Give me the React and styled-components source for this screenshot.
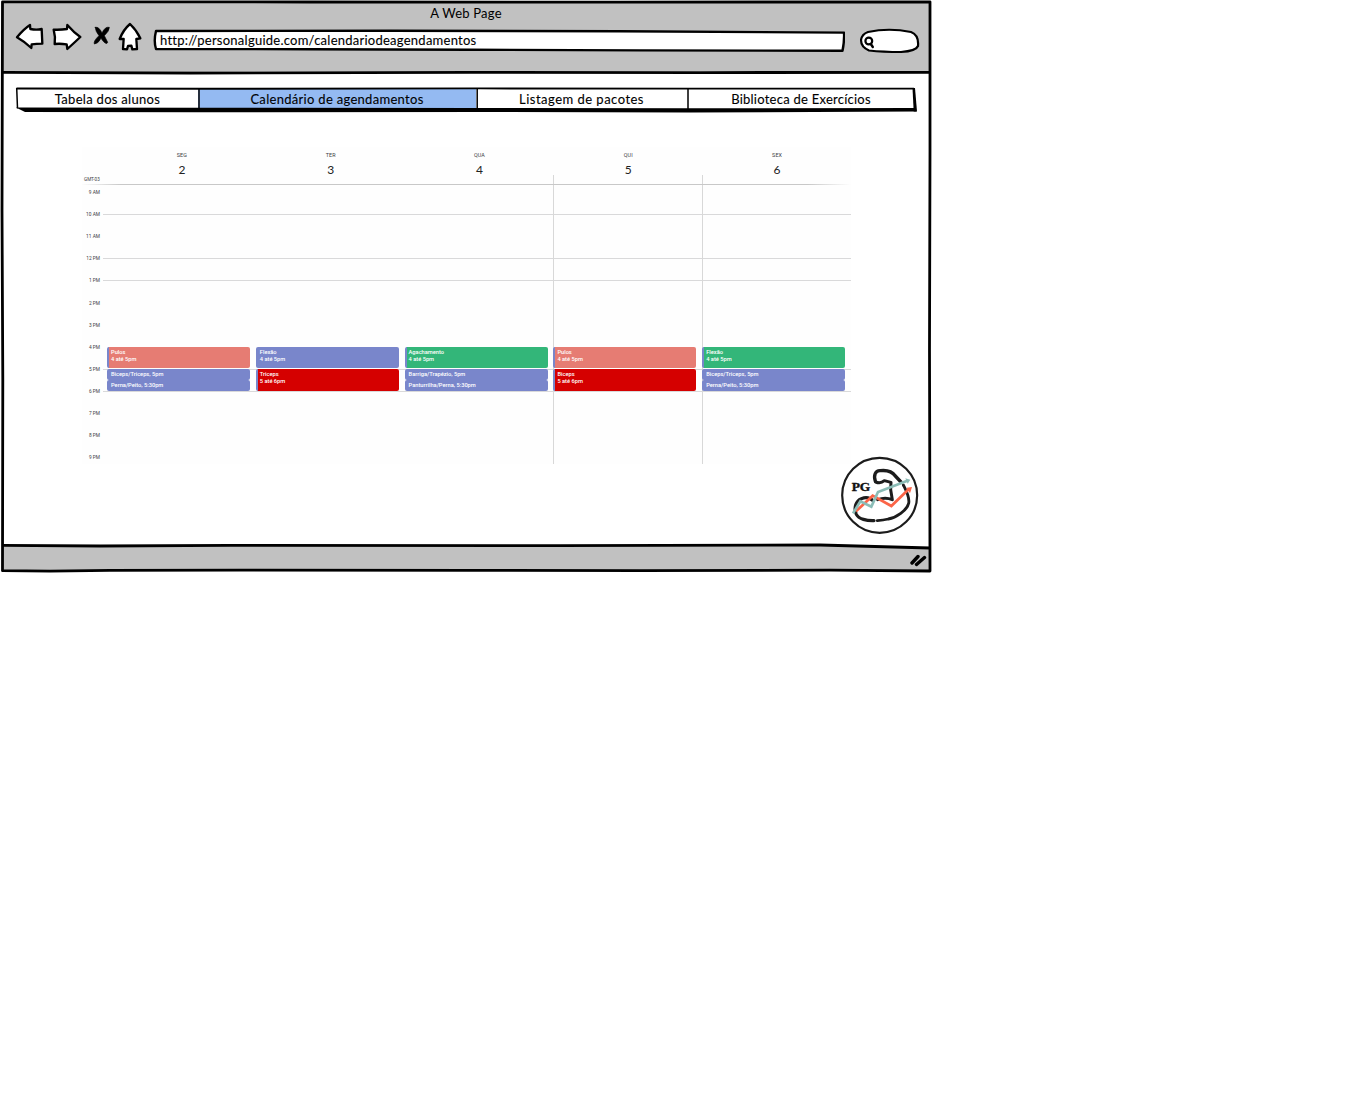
import React from "react";
import styled, { createGlobalStyle } from "styled-components";

const GlobalStyle = createGlobalStyle`
  *, *::before, *::after { box-sizing: border-box; }
  body { margin: 0; background: #fff; color: #000; font-family: Lato, "Open Sans", sans-serif; }
`;

const Browser = styled.main`
  width: 932px;
  height: 573px;
  display: grid;
  grid-template-rows: 71px 473px 29px;
  position: relative;
  padding: 0 1px;
`;

const FrameSketch = styled.svg`
  position: absolute;
  inset: 0;
  width: 932px;
  height: 573px;
  pointer-events: none;
`;

const Chrome = styled.header`
  background: #c1c1c1;
  margin: 1px 1px 0;
  display: flex;
  flex-direction: column;
`;

const Title = styled.div`
  height: 21px;
  padding-top: 3px;
  text-align: center;
  font-size: 13px;
  line-height: 19px;
  letter-spacing: 0.22px;
`;

const Toolbar = styled.div`
  display: flex;
  height: 32px;
  padding-left: 13px;
`;

const NavIcon = styled.svg`
  width: ${(p) => p.$w}px;
  height: 30px;
  margin-right: ${(p) => p.$gap}px;
  fill: ${(p) => (p.$solid ? "#000" : "#fff")};
  stroke: #000;
  stroke-width: ${(p) => (p.$solid ? 2 : 7)};
  stroke-linejoin: round;
  stroke-linecap: round;
`;

const Address = styled.div`
  position: relative;
  width: 692px;
  height: 24px;
  margin: 7px 14px 0 0;
  padding-left: 7px;
  font-size: 13px;
  line-height: 23px;
  white-space: nowrap;
`;

const Search = styled.svg`
  width: 61px;
  height: 26px;
  margin-top: 6px;
`;

const Outline = styled.svg`
  position: absolute;
  inset: 0;
  width: 100%;
  height: 100%;
`;

const AddressText = styled.span`
  position: relative;
  letter-spacing: 0.25px;
  -webkit-text-stroke: 0.1px #000;
`;

const Content = styled.section`
  display: flex;
  flex-direction: column;
  padding-top: 16px;
`;

const Tabs = styled.nav`
  position: relative;
  display: flex;
  width: 903px;
  height: 26px;
  margin-left: 14px;
  padding: 2px 3px 5px 2px;
`;

const Tab = styled.a`
  width: ${(p) => p.$w}px;
  background: ${(p) => (p.$active ? "#94baf2" : "#fff")};
  text-align: center;
  font-size: 13px;
  line-height: 20px;
  letter-spacing: ${(p) => p.$track};
  -webkit-text-stroke: 0.1px #000;
  white-space: nowrap;
`;

const Calendar = styled.section`
  width: 769px;
  height: 317px;
  margin: 34px 0 0 81px;
  background: #fefefe;
  color: #3c4043;
  font-family: Roboto, "Open Sans", sans-serif;
`;

const CalendarHead = styled.div`
  display: flex;
  height: 38px;
  border-bottom: 1px solid;
  border-image: linear-gradient(90deg, #fefefe 0, #c8c8c8 40px, #c8c8c8 725px, #fefefe 768px) 1;
`;

const Zone = styled.div`
  width: 25px;
  padding: 29px 0 0 2px;
  font-size: 4.6px;
  line-height: 7px;
  white-space: nowrap;
`;

const DayHead = styled.div`
  width: 148.8px;
  padding: 4px 0 0 1px;
  text-align: center;
  background: ${(p) => (p.$line ? "linear-gradient(#d8d8d8, #d8d8d8) 0 28px / 1px 9px no-repeat" : "none")};
`;

const DayName = styled.div`
  font-size: 5.4px;
  line-height: 8px;
  letter-spacing: 0.1px;
`;

const DayNumber = styled.div`
  font-family: Lato, sans-serif;
  font-size: 12px;
  line-height: 14px;
  margin-top: 4px;
  color: #222;
`;

const CalendarBody = styled.div`
  display: grid;
  height: 279px;
  overflow: hidden;
`;

const Hours = styled.div`
  grid-area: 1 / 1;
  padding-top: 6.8px;
`;

const HourRow = styled.div`
  display: flex;
  height: 22.15px;
`;

const HourLabel = styled.div`
  width: 18px;
  margin-top: -3px;
  margin-right: 3px;
  font-size: 4.8px;
  line-height: 8px;
  text-align: right;
  white-space: nowrap;
`;

const HourLine = styled.div`
  flex: 1;
  height: 1px;
  background: ${(p) => (p.$visible ? "#d9d9da" : "transparent")};
`;

const Days = styled.div`
  grid-area: 1 / 1;
  display: grid;
  grid-template-columns: repeat(5, 148.8px);
  padding-left: 25px;
`;

const Day = styled.div`
  display: grid;
  grid-template-rows: repeat(24, 11.075px);
  padding-top: 6.8px;
  background: ${(p) => (p.$line ? "linear-gradient(#d8d8d8, #d8d8d8) 0 0 / 1px 100% no-repeat" : "none")};
`;

const Event = styled.div`
  grid-row: ${(p) => p.$row} / span ${(p) => p.$span};
  width: 143px;
  height: ${(p) => p.$h}px;
  padding: 2.1px 0 0 ${(p) => (p.$stripe ? 2 : 4)}px;
  background: ${(p) => p.$color};
  border-left: ${(p) => (p.$stripe ? "2px solid #7986cb" : "0")};
  border-radius: 2px;
  color: #fff;
  font-size: 5.7px;
  font-weight: 500;
  line-height: 7px;
  white-space: nowrap;
`;

const Logo = styled.svg`
  width: 80px;
  height: 80px;
  margin: -9px 0 0 839px;
  flex: none;
`;

const Status = styled.footer`
  display: flex;
  justify-content: flex-end;
  align-items: flex-start;
  margin: 1px 1px 2px;
  padding: 7px 2px 0 0;
  background: #c1c1c1;
  clip-path: polygon(0 0, 88% 0, 100% 3px, 100% 100%, 0 100%);
`;

const Grip = styled.svg`
  width: 18px;
  height: 16px;
`;

const CORAL = "#e67c73";
const INDIGO = "#7986cb";
const GREEN = "#33b679";
const RED = "#d50000";

const tabs = [
  { label: "Tabela dos alunos", w: 181, track: "0.3px" },
  { label: "Calendário de agendamentos", w: 278, active: true, track: "0.3px" },
  { label: "Listagem de pacotes", w: 211, track: "0.48px" },
  { label: "Biblioteca de Exercícios", w: 228, track: "0.25px" },
];

const hours = ["9 AM", "10 AM", "11 AM", "12 PM", "1 PM", "2 PM", "3 PM", "4 PM", "5 PM", "6 PM", "7 PM", "8 PM", "9 PM"];
const ruled = ["10 AM", "12 PM", "1 PM", "5 PM", "6 PM"];

const at4 = (name, color) => ({ lines: [name, "4 até 5pm"], color, row: 15, span: 2, h: 21, stripe: color !== INDIGO });
const at5 = (name) => ({ lines: [name, "5 até 6pm"], color: RED, row: 17, span: 2, h: 22, stripe: true });
const half = (text, row) => ({ lines: [text], color: INDIGO, row, span: 1, h: 11.1 });

const days = [
  { name: "SEG", num: 2, events: [at4("Pulos", CORAL), half("Biceps/Triceps, 5pm", 17), half("Perna/Peito, 5:30pm", 18)] },
  { name: "TER", num: 3, events: [at4("Flexão", INDIGO), at5("Triceps")] },
  { name: "QUA", num: 4, events: [at4("Agachamento", GREEN), half("Barriga/Trapézio, 5pm", 17), half("Panturrilha/Perna, 5:30pm", 18)] },
  { name: "QUI", num: 5, line: true, events: [at4("Pulos", CORAL), at5("Biceps")] },
  { name: "SEX", num: 6, line: true, events: [at4("Flexão", GREEN), half("Biceps/Triceps, 5pm", 17), half("Perna/Peito, 5:30pm", 18)] },
];

function NavIcons() {
  return (
    <>
      <NavIcon $w={30} $gap={7} viewBox="45 66 90 90">
        <path d="M51 112 Q70 88 90 75 L91 87 Q110 91 125 87 L127 131 Q109 131 95 133 L94 144 Q72 124 51 112Z" />
      </NavIcon>
      <NavIcon $w={30} $gap={10} viewBox="156 66 90 90">
        <path d="M161 89 Q182 90 201 87 L202 75 Q222 98 241 111 Q221 130 202 147 L200 133 Q180 130 164 132 Q167 111 161 89Z" />
      </NavIcon>
      <NavIcon $w={19} $gap={7} $solid viewBox="276 66 57 90">
        <path d="M286 82 Q297 79 306 99 Q315 79 328 82 Q328 93 313 107 L323 127 Q319 138 303 115 Q294 132 283 132 Q280 123 297 107 Q286 94 286 82Z" />
      </NavIcon>
      <NavIcon $w={24} $gap={11} viewBox="354 66 72 90">
        <path d="M390 72 Q410 91 421 115 L409 117 L411 147 L397 148 L394 137 L384 138 L381 148 L369 147 L371 117 L359 117 Q370 89 390 72Z" />
      </NavIcon>
    </>
  );
}

function Frame() {
  return (
    <FrameSketch viewBox="0 0 932 573" fill="none" stroke="#000" strokeWidth="2.8" strokeLinejoin="round">
      <path d="M2.5 1.8 L310 2 L620 2.2 L930 1.8 L930 150 L929.5 350 L930 571 L830 570.2 L640 570.6 L470 570.4 L240 570.2 L110 570.3 L50 571.2 L2.5 570.7 L2.8 380 L2 210 L2.5 1.8Z" />
      <path d="M2 72.3 L190 73 L470 72.3 L700 72.6 L930 72.3" />
      <path d="M2 545.3 L100 546 L230 545.3 L560 545.6 L820 545 L930 548" />
    </FrameSketch>
  );
}

function BrandLogo() {
  return (
    <Logo viewBox="30 15 240 240" fill="none" strokeLinejoin="round" strokeLinecap="round">
      <circle cx="149" cy="136" r="112.5" stroke="#1c1c1c" strokeWidth="6.5" fill="#fff" />
      <text x="65" y="122" fill="#111" stroke="#111" strokeWidth="1.2" fontFamily="Liberation Serif, serif" fontWeight="700" fontSize="39" textLength="56" lengthAdjust="spacingAndGlyphs">PG</text>
      <path d="M136 94 C130 76 136 61 151 62 C169 60 187 65 196 78 L213 96" stroke="#1c1c1c" strokeWidth="10" />
      <path d="M220 105 C229 123 240 142 236 160 C232 181 197 203 175 207 Q160 211 142 212" stroke="#1c1c1c" strokeWidth="8.5" />
      <path d="M132 212 C111 213 86 207 79 193 C70 173 78 152 94 146 C109 140 122 145 129 152" stroke="#1c1c1c" strokeWidth="9.5" />
      <path d="M137 96 Q152 102 163 92 L183 97 L182 119 L187 149 Q166 140 143 149" stroke="#1c1c1c" strokeWidth="9" />
      <path d="M78 184 L128 137 L184 168 L236 118" stroke="#fb6548" strokeWidth="8" strokeLinejoin="miter" strokeLinecap="butt" />
      <path d="M230 113 L246 111 L240 130Z" fill="#fb6548" />
      <path d="M69 190 L91 154 L124 170 L144 126 L232 92" stroke="#8bbcb6" strokeWidth="8" strokeLinejoin="miter" strokeLinecap="butt" />
      <path d="M226 85 L241 89 L233 101Z" fill="#8bbcb6" />
    </Logo>
  );
}

export default function App() {
  return (
    <>
      <GlobalStyle />
      <Browser>
        <Chrome>
          <Title>A Web Page</Title>
          <Toolbar>
            <NavIcons />
            <Address>
              <Outline viewBox="153 30 692 24" fill="#fff" stroke="#000" strokeWidth="2.4" strokeLinejoin="round">
                <path d="M156 32 L390 31.8 L620 32.2 L844 33.6 Q844.5 42 842.5 51.8 L640 51.4 L470 50.7 L310 50.2 L156 50 Q153.5 42 156 32Z" />
              </Outline>
              <AddressText>http://personalguide.com/calendariodeagendamentos</AddressText>
            </Address>
            <Search viewBox="859 28 61 26" fill="#fff" stroke="#000" strokeWidth="2.2" strokeLinecap="round">
              <path d="M868 32 Q889 27.5 911 32 Q919 35 918 46 Q916 51 901 52 Q883 52 869 50.5 Q861 47 861 40 Q862 34 868 32Z" />
              <circle cx="868.8" cy="41" r="3.4" />
              <path d="M870.8 44 L872.8 47" strokeWidth="2.4" />
            </Search>
          </Toolbar>
        </Chrome>
        <Content>
          <Tabs>
            {tabs.map((t) => (
              <Tab key={t.label} $w={t.w} $active={t.active} $track={t.track}>{t.label}</Tab>
            ))}
            <Outline viewBox="15 87 903 26" fill="none" stroke="#000">
              <path d="M16.5 88.5 L200 88.8 L480 88.4 L690 88.6 L914 88.6" strokeWidth="1.9" />
              <path d="M16.7 88 L17.5 108.5 M199 88 V109 M477.2 88 V109 M688 88 V109" strokeWidth="1.5" />
              <path d="M16 107.6 L200 107.8 L477 108 L688 108.2 L915 108 L916.5 111.5 L690 112.5 L480 112 L200 112.3 L25 111.9Z" fill="#000" stroke="none" />
              <path d="M912.5 88 L915 88 L917 111.5 L913.7 111.5Z" fill="#000" stroke="none" />
            </Outline>
          </Tabs>
          <Calendar>
            <CalendarHead>
              <Zone>GMT-03</Zone>
              {days.map((d) => (
                <DayHead key={d.name} $line={d.line}>
                  <DayName>{d.name}</DayName>
                  <DayNumber>{d.num}</DayNumber>
                </DayHead>
              ))}
            </CalendarHead>
            <CalendarBody>
              <Hours>
                {hours.map((h) => (
                  <HourRow key={h}>
                    <HourLabel>{h}</HourLabel>
                    <HourLine $visible={ruled.includes(h)} />
                  </HourRow>
                ))}
              </Hours>
              <Days>
                {days.map((d) => (
                  <Day key={d.name} $line={d.line}>
                    {d.events.map((e) => (
                      <Event key={e.lines[0]} $row={e.row} $span={e.span} $h={e.h} $color={e.color} $stripe={e.stripe}>
                        {e.lines.map((l) => <div key={l}>{l}</div>)}
                      </Event>
                    ))}
                  </Day>
                ))}
              </Days>
            </CalendarBody>
          </Calendar>
          <BrandLogo />
        </Content>
        <Status>
          <Grip viewBox="909 552 18 16" stroke="#000" strokeWidth="3.4" strokeLinecap="round">
            <path d="M911 563 L917 556.5 M915.5 564.5 L923.5 557.5" />
          </Grip>
        </Status>
        <Frame />
      </Browser>
    </>
  );
}
